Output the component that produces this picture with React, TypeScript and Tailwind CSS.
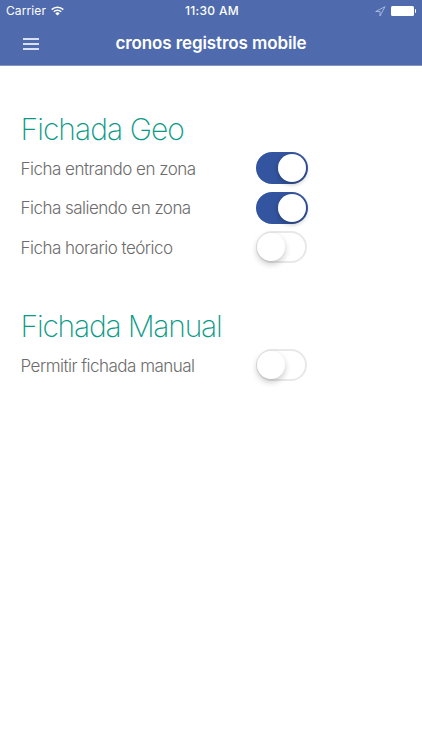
import { useState } from 'react'
import clsx from 'clsx'

type Option = { id: string; label: string; enabled: boolean; tracking: string }

const geoOptions: Option[] = [
  { id: 'enter', label: 'Ficha entrando en zona', enabled: true, tracking: 'tracking-[-0.5px]' },
  { id: 'leave', label: 'Ficha saliendo en zona', enabled: true, tracking: 'tracking-[-0.52px]' },
  { id: 'schedule', label: 'Ficha horario teórico', enabled: false, tracking: 'tracking-[-0.52px]' },
]

const manualOptions: Option[] = [
  { id: 'manual', label: 'Permitir fichada manual', enabled: false, tracking: 'tracking-[-0.52px]' },
]

const WifiIcon = () => (
  <svg width="13" height="10" viewBox="0 0 13 10" fill="none" stroke="white" strokeWidth="1.5">
    <path d="M0.7 3.6a8.2 8.2 0 0 1 11.6 0" />
    <path d="M2.8 5.8a5.2 5.2 0 0 1 7.4 0" />
    <path d="M6.5 9.6 4.3 7.4a3.1 3.1 0 0 1 4.4 0z" fill="white" stroke="none" />
  </svg>
)

const LocationIcon = () => (
  <svg width="11" height="11" viewBox="0 0 11 11" fill="none" stroke="#b9c6e6" strokeWidth="0.8" strokeLinejoin="round">
    <path d="M10 0.7 0.7 5.5H5V10z" />
  </svg>
)

const StatusBar = () => (
  <div className="flex h-[22px] items-center justify-between pl-[6px] pr-[6px] text-[12px] leading-[22px]">
    <div className="flex flex-1 items-center gap-[5px]">
      <span className="text-[12px] tracking-[0.1px]">Carrier</span>
      <WifiIcon />
    </div>
    <span className="pl-[2px] font-medium tracking-[0.3px]">11:30 AM</span>
    <div className="flex flex-1 items-center justify-end gap-[5px]">
      <LocationIcon />
      <div className="flex items-center gap-px">
        <div className="h-[10px] w-[23px] rounded-[1.5px] bg-white" />
        <div className="h-[4px] w-[1.5px] rounded-r-full bg-white" />
      </div>
    </div>
  </div>
)

const Header = () => (
  <header className="h-[66px] border-b border-[#8794bd] bg-[#4f6bad] text-white">
    <StatusBar />
    <div className="grid h-[43px] grid-cols-[61px_1fr_61px] items-center">
      <button className="ml-[23px] flex w-[16px] flex-col gap-[3px]" aria-label="Menu">
        <span className="h-[2px] w-full bg-[#d9e0f0]" />
        <span className="h-[2px] w-full bg-[#d9e0f0]" />
        <span className="h-[2px] w-full bg-[#d9e0f0]" />
      </button>
      <h1 className="text-center text-[17px] font-semibold tracking-[-0.1px] whitespace-nowrap">cronos registros mobile</h1>
    </div>
  </header>
)

const Toggle = ({ on, label, onChange }: { on: boolean; label: string; onChange: () => void }) => (
  <button
    role="switch"
    aria-checked={on}
    aria-label={label}
    onClick={onChange}
    className={clsx(
      'flex h-8 items-center rounded-full',
      on ? 'w-[52px] justify-end bg-[#3355a0] pr-[2px]' : 'w-[51px] border-2 border-[#e8e8e8] bg-white'
    )}
  >
    <span
      className={clsx(
        'size-[28px] shrink-0 rounded-full bg-white',
        on ? 'shadow-[0_2px_5px_rgba(0,0,0,0.3)]' : '-ml-px shadow-[0_3px_6px_rgba(0,0,0,0.22)]'
      )}
    />
  </button>
)

const Section = ({ title, titleClass, options }: { title: string; titleClass: string; options: Option[] }) => {
  const [values, setValues] = useState(options.map((option) => option.enabled))

  return (
    <section className="pl-[20.5px]">
      <h2 className={clsx('h-[38px] text-[30px] leading-[38px] font-extralight text-[#0b9a86]', titleClass)}>{title}</h2>
      {options.map((option, i) => (
        <div key={option.id} className="flex h-[39.7px] items-center">
          <span className={clsx('w-[235px] pt-[3px] text-[17px] font-light whitespace-nowrap text-[#6c6c6c]', option.tracking)}>
            {option.label}
          </span>
          <Toggle
            on={values[i]}
            label={option.label}
            onChange={() => setValues(values.map((value, j) => (j === i ? !value : value)))}
          />
        </div>
      ))}
    </section>
  )
}

export default function App() {
  return (
    <div className="min-h-[750px] w-full bg-white font-['Inter',sans-serif]">
      <Header />
      <main className="flex flex-col gap-[40px] pt-[44px]">
        <Section title="Fichada Geo" titleClass="tracking-[-0.95px]" options={geoOptions} />
        <Section title="Fichada Manual" titleClass="tracking-[-1.2px]" options={manualOptions} />
      </main>
    </div>
  )
}
